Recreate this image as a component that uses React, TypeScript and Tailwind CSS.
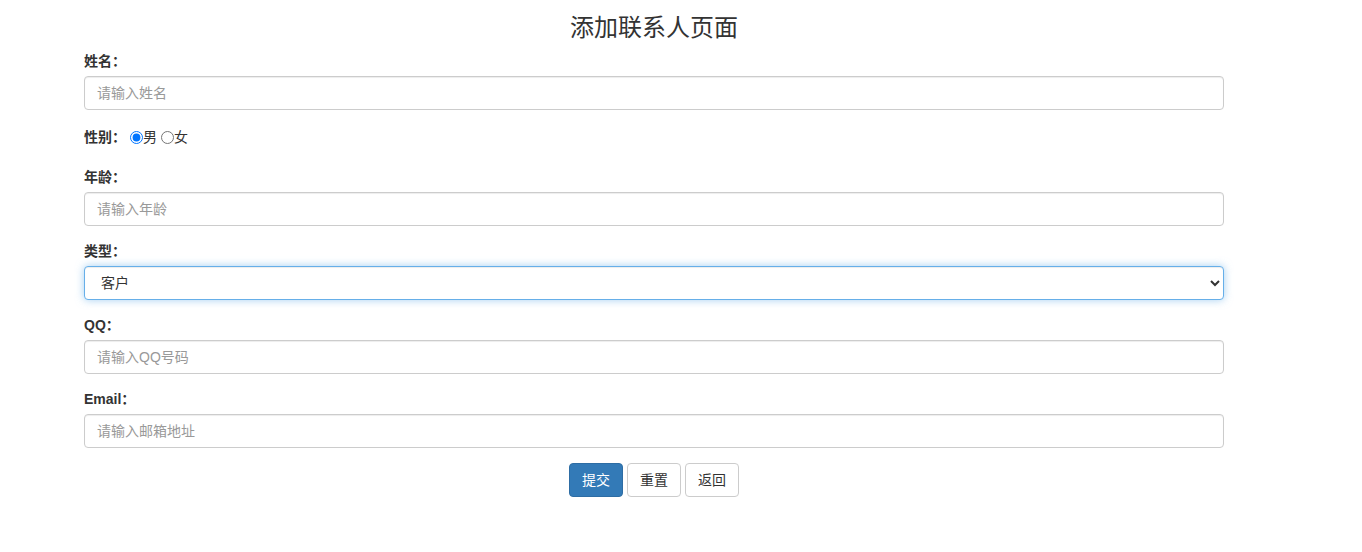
import React from 'react'

const font = { fontFamily: '"Liberation Sans", "Noto Sans CJK SC", sans-serif' }

function Field({ label, placeholder }: { label: string; placeholder: string }) {
  return (
    <div className="mb-[15px]">
      <label className="mb-[5px] block text-[14px] font-bold leading-[20px] text-[#333]">{label}</label>
      <input
        type="text"
        placeholder={placeholder}
        className="block h-[34px] w-full rounded-[4px] border border-[#ccc] bg-white px-3 py-[6px] text-[14px] text-[#555] shadow-[inset_0_1px_1px_rgba(0,0,0,0.075)] outline-none placeholder:text-[#999]"
      />
    </div>
  )
}

export default function App() {
  return (
    <div className="min-h-screen bg-white text-[14px] text-[#333]" style={font}>
      <div className="ml-[84px] w-[1140px] pt-[15px]">
        <h3 className="mb-[10px] text-center text-[24px] font-normal leading-[26px] text-[#333]">添加联系人页面</h3>
        <form>
          <Field label="姓名：" placeholder="请输入姓名" />

          {/* gender radios */}
          <div className="mb-[20px] flex h-[22px] items-center pt-[2px] text-[14px]">
            <label className="font-bold leading-[20px]">性别：</label>
            <label className="ml-[4px] flex items-center">
              <input type="radio" name="sex" defaultChecked className="m-0 h-[13px] w-[13px]" />
              <span>男</span>
            </label>
            <label className="ml-[4px] flex items-center">
              <input type="radio" name="sex" className="m-0 h-[13px] w-[13px]" />
              <span>女</span>
            </label>
          </div>

          <Field label="年龄：" placeholder="请输入年龄" />

          <div className="mb-[15px]">
            <label className="mb-[5px] block text-[14px] font-bold leading-[20px]">类型：</label>
            <select
              defaultValue="客户"
              className="block h-[34px] w-full rounded-[4px] border border-[#66afe9] bg-white px-3 py-[6px] text-[14px] text-[#333] shadow-[inset_0_1px_1px_rgba(0,0,0,0.075),0_0_8px_rgba(102,175,233,0.6)] outline-none"
            >
              <option>客户</option>
              <option>朋友</option>
              <option>同事</option>
            </select>
          </div>

          <Field label="QQ：" placeholder="请输入QQ号码" />
          <Field label="Email：" placeholder="请输入邮箱地址" />

          <div className="flex justify-center gap-[4px]">
            <button
              type="button"
              className="h-[34px] rounded-[4px] border border-[#2e6da4] bg-[#337ab7] px-3 text-[14px] text-white"
            >
              提交
            </button>
            <button
              type="button"
              className="h-[34px] rounded-[4px] border border-[#ccc] bg-white px-3 text-[14px] text-[#333]"
            >
              重置
            </button>
            <button
              type="button"
              className="h-[34px] rounded-[4px] border border-[#ccc] bg-white px-3 text-[14px] text-[#333]"
            >
              返回
            </button>
          </div>
        </form>
      </div>
    </div>
  )
}
